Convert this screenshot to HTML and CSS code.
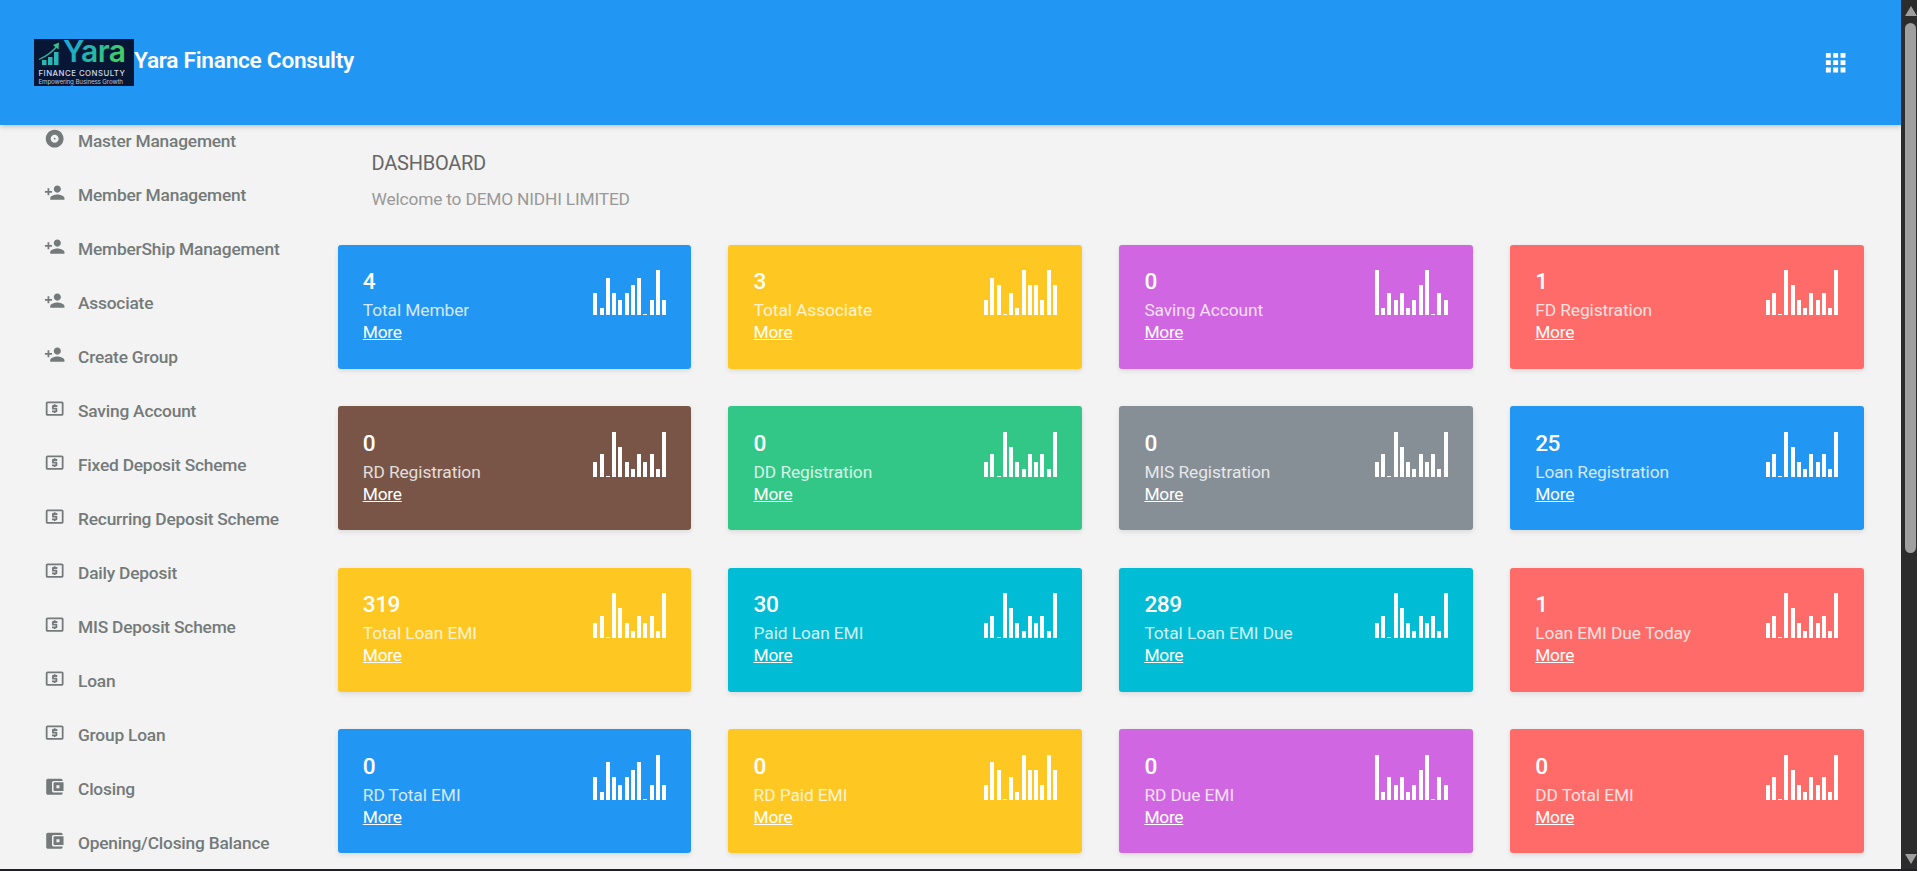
FILE: index.html
```html
<!DOCTYPE html>
<html lang="en">
<head>
    <meta charset="UTF-8">
    <meta name="viewport" content="width=device-width, initial-scale=1.0">
    <title>Dashboard</title>
    <link rel="stylesheet" href="styles.css">
</head>
<body>
    <svg class="sprite">
        <symbol id="album" viewBox="0 0 24 24"><path d="M12 2C6.48 2 2 6.48 2 12s4.48 10 10 10 10-4.48 10-10S17.52 2 12 2zm0 14.5c-2.49 0-4.5-2.01-4.5-4.5S9.51 7.5 12 7.5s4.5 2.01 4.5 4.5-2.01 4.5-4.5 4.5zm0-5.5c-.55 0-1 .45-1 1s.45 1 1 1 1-.45 1-1-.45-1-1-1z"/></symbol>
        <symbol id="person-add" viewBox="0 0 24 24"><path d="M15 12c2.21 0 4-1.79 4-4s-1.79-4-4-4-4 1.79-4 4 1.79 4 4 4zm-9-2V7H4v3H1v2h3v3h2v-3h3v-2H6zm9 4c-2.67 0-8 1.34-8 4v2h16v-2c0-2.66-5.33-4-8-4z"/></symbol>
        <symbol id="atm" viewBox="0 0 24 24"><path d="M11 17h2v-1h1c.55 0 1-.45 1-1v-3c0-.55-.45-1-1-1h-3v-1h4V8h-2V7h-2v1h-1c-.55 0-1 .45-1 1v3c0 .55.45 1 1 1h3v1H9v2h2v1zm9-13H4c-1.11 0-1.99.89-1.99 2L2 18c0 1.11.89 2 2 2h16c1.11 0 2-.89 2-2V6c0-1.11-.89-2-2-2zm0 14H4V6h16v12z"/></symbol>
        <symbol id="wallet" viewBox="0 0 24 24"><path fill-rule="evenodd" d="M21 18.5v.5c0 1.1-.9 2-2 2H4.500c-1.100 0-2-.9-2-2V5c0-1.100.9-2 2-2H19c1.100 0 2 .9 2 2v.5H11c-1.100 0-2 .9-2 2v9c0 1.100.9 2 2 2zM12 7h10v10H12c-.7 0-1.300-.6-1.300-1.300V8.300C10.700 7.600 11.300 7 12 7zm2 3.300v3.400h3.400v-3.400z"/></symbol>
        <symbol id="apps" viewBox="0 0 24 24"><path d="M4 8h4V4H4v4zm6 12h4v-4h-4v4zm-6 0h4v-4H4v4zm0-6h4v-4H4v4zm6 0h4v-4h-4v4zm6-10v4h4V4h-4zm-6 4h4V4h-4v4zm6 6h4v-4h-4v4zm0 6h4v-4h-4v4z"/></symbol>
    </svg>

    <div class="page">
        <header class="header">
            <a class="brand" href="#">
                <svg class="logo" viewBox="0 0 100 47">
                    <defs>
                        <linearGradient id="logo-fill" x1="0" y1="0" x2="1" y2="0.3">
                            <stop offset="0" stop-color="#1fa5dd"/>
                            <stop offset="0.5" stop-color="#20b3b0"/>
                            <stop offset="1" stop-color="#42cf62"/>
                        </linearGradient>
                    </defs>
                    <rect width="100" height="47" fill="#071635"/>
                    <path d="M8 21h4.500v5H8zM14 18h4.500v8H14zM20 13h4.500v13H20z" fill="#2bb5b5"/>
                    <path d="M5 20.500Q17 15 23 7" fill="none" stroke="#2fb79b" stroke-width="1.300"/>
                    <path d="M19 6l6-2.500-.5 7z" fill="#35c283"/>
                    <text class="logo-name" x="29" y="22.500" textLength="63" fill="url(#logo-fill)">Yara</text>
                    <text class="logo-sub" x="4.500" y="36.800" textLength="86.500">FINANCE CONSULTY</text>
                    <text class="logo-tag" x="4.500" y="45.200" textLength="84.500">Empowering Business Growth</text>
                </svg>
                <span class="brand-name">Yara Finance Consulty</span>
            </a>
            <svg class="apps"><use href="#apps"/></svg>
        </header>

        <div class="body">
            <nav class="sidebar">
                <a href="#"><svg><use href="#album"/></svg>Master Management</a>
                <a href="#"><svg><use href="#person-add"/></svg>Member Management</a>
                <a href="#"><svg><use href="#person-add"/></svg>MemberShip Management</a>
                <a href="#"><svg><use href="#person-add"/></svg>Associate</a>
                <a href="#"><svg><use href="#person-add"/></svg>Create Group</a>
                <a href="#"><svg><use href="#atm"/></svg>Saving Account</a>
                <a href="#"><svg><use href="#atm"/></svg>Fixed Deposit Scheme</a>
                <a href="#"><svg><use href="#atm"/></svg>Recurring Deposit Scheme</a>
                <a href="#"><svg><use href="#atm"/></svg>Daily Deposit</a>
                <a href="#"><svg><use href="#atm"/></svg>MIS Deposit Scheme</a>
                <a href="#"><svg><use href="#atm"/></svg>Loan</a>
                <a href="#"><svg><use href="#atm"/></svg>Group Loan</a>
                <a href="#"><svg><use href="#wallet"/></svg>Closing</a>
                <a href="#"><svg><use href="#wallet"/></svg>Opening/Closing Balance</a>
            </nav>

            <main class="content">
                <h1>DASHBOARD</h1>
                <p class="welcome">Welcome to DEMO NIDHI LIMITED</p>
                <div class="cards" id="cards"></div>
            </main>
        </div>
    </div>

    <div class="scrollbar">
        <span class="arrow up"></span>
        <span class="thumb"></span>
        <span class="arrow down"></span>
    </div>

    <script src="script.js"></script>
</body>
</html>
```

FILE: styles.css
```css
* {
    box-sizing: border-box;
}

body {
    margin: 0;
    height: 871px;
    display: flex;
    overflow: hidden;
    font-family: Roboto, sans-serif;
    background: #f3f3f3;
    border-bottom: 2px solid #202023;
}

a {
    color: inherit;
    text-decoration: none;
}

.sprite {
    display: none;
}

.page {
    flex: 1;
    height: 869px;
    overflow: hidden;
}

/* Header */
.header {
    position: relative;
    z-index: 1;
    height: 125px;
    padding: 0 50.5px 0 34px;
    display: flex;
    justify-content: space-between;
    align-items: center;
    background: #2196f3;
    color: #fff;
    box-shadow: 0 1px 6px rgba(0, 0, 0, 0.25);
}

.brand {
    display: flex;
    align-items: center;
}

.logo {
    width: 100px;
    height: 47px;
    overflow: visible;
}

.logo-name {
    font-family: Inter, sans-serif;
    font-size: 30px;
    font-weight: 600;
}

.logo-sub {
    font-family: Inter, sans-serif;
    font-size: 7.8px;
    font-weight: 500;
    fill: #d5dbe8;
}

.logo-tag {
    font-family: Inter, sans-serif;
    font-size: 6.2px;
    fill: #b9c2d4;
}

.brand-name {
    font-size: 22.67px;
    font-weight: 600;
    line-height: 26px;
    letter-spacing: -0.27px;
    padding-bottom: 3px;
}

.apps {
    width: 29.33px;
    height: 29.33px;
    fill: #fff;
}

.body {
    display: flex;
}

/* Sidebar */
.sidebar {
    width: 337.6px;
    padding-left: 44.3px;
    color: #747a7a;
}

.sidebar a {
    display: flex;
    align-items: center;
    height: 54px;
    font-size: 17.33px;
    font-weight: 500;
    letter-spacing: -0.2px;
}

.sidebar a:first-child {
    margin-top: -11px;
}

.sidebar svg {
    width: 21.33px;
    height: 21.33px;
    margin: 0 12.4px 5px 0;
    fill: currentColor;
}

/* Dashboard */
.content {
    flex: 1;
    padding-right: 37.4px;
}

h1 {
    margin: 26px 0 0 34px;
    font-size: 20px;
    font-weight: 400;
    line-height: 24px;
    letter-spacing: -0.25px;
    color: #666;
}

.welcome {
    margin: 12px 0 0 34px;
    font-size: 17.33px;
    line-height: 24px;
    letter-spacing: -0.18px;
    color: #999;
}

.cards {
    display: grid;
    grid-template-columns: repeat(4, 1fr);
    gap: 37.4px 37.2px;
    margin-top: 34px;
}

.card {
    display: flex;
    justify-content: space-between;
    height: 124px;
    padding: 25.4px 25.2px;
    border-radius: 3px;
    color: #fff;
    box-shadow: 0 2px 5px rgba(0, 0, 0, 0.1);
}

.blue { background: #2196f3; }
.yellow { background: #ffc721; }
.purple { background: #d066e2; }
.red { background: #ff6b68; }
.brown { background: #795548; }
.green { background: #32c787; }
.grey { background: #868e96; }
.cyan { background: #00bcd4; }

.card h2 {
    margin: 0;
    font-size: 22.67px;
    font-weight: 500;
    line-height: 24px;
    letter-spacing: -0.5px;
}

.card small {
    display: block;
    margin-top: 6px;
    height: 19px;
    overflow: hidden;
    font-size: 17.33px;
    line-height: 20px;
    letter-spacing: -0.08px;
    opacity: 0.8;
}

.card a {
    display: block;
    margin-top: 2px;
    font-size: 17.33px;
    line-height: 22px;
    letter-spacing: -0.25px;
    text-decoration: underline;
}

.chart {
    display: flex;
    align-items: flex-end;
    gap: 2.25px;
    height: 45px;
}

.chart span {
    width: 4px;
    min-height: 1px;
    background: #fff;
}

/* Scrollbar */
.scrollbar {
    width: 16px;
    display: flex;
    flex-direction: column;
    align-items: center;
    padding: 6px 0 5px 3px;
    background: #2c2c2c;
}

.thumb {
    width: 11px;
    height: 530px;
    margin-top: 7px;
    border-radius: 6px;
    background: #9f9f9f;
}

.arrow {
    border: 6px solid transparent;
}

.up {
    border-top: 0;
    border-bottom: 10px solid #9f9f9f;
}

.down {
    margin-top: auto;
    border-bottom: 0;
    border-top: 10px solid #9f9f9f;
}
```

FILE: script.js
```js
const charts = {
    a: [3, 1, 5, 3, 2, 3, 4, 5, 0, 2, 6, 2],
    b: [2, 5, 4, 0, 3, 1, 6, 4, 4, 2, 6, 4],
    c: [6, 1, 3, 2, 3, 1, 2, 4, 6, 0, 3, 2],
    d: [2, 3, 0, 6, 4, 2, 1, 3, 2, 3, 1, 6]
};

const cards = [
    ['4', 'Total Member', 'blue', 'a'],
    ['3', 'Total Associate', 'yellow', 'b'],
    ['0', 'Saving Account', 'purple', 'c'],
    ['1', 'FD Registration', 'red', 'd'],
    ['0', 'RD Registration', 'brown', 'd'],
    ['0', 'DD Registration', 'green', 'd'],
    ['0', 'MIS Registration', 'grey', 'd'],
    ['25', 'Loan Registration', 'blue', 'd'],
    ['319', 'Total Loan EMI', 'yellow', 'd'],
    ['30', 'Paid Loan EMI', 'cyan', 'd'],
    ['289', 'Total Loan EMI Due', 'cyan', 'd'],
    ['1', 'Loan EMI Due Today', 'red', 'd'],
    ['0', 'RD Total EMI', 'blue', 'a'],
    ['0', 'RD Paid EMI', 'yellow', 'b'],
    ['0', 'RD Due EMI', 'purple', 'c'],
    ['0', 'DD Total EMI', 'red', 'd']
];

document.getElementById('cards').innerHTML = cards.map(([value, label, color, chart]) => `
    <div class="card ${color}">
        <div>
            <h2>${value}</h2>
            <small>${label}</small>
            <a href="#">More</a>
        </div>
        <div class="chart">
            ${charts[chart].map(n => `<span style="height: ${n * 7.5}px"></span>`).join('')}
        </div>
    </div>
`).join('');
```
